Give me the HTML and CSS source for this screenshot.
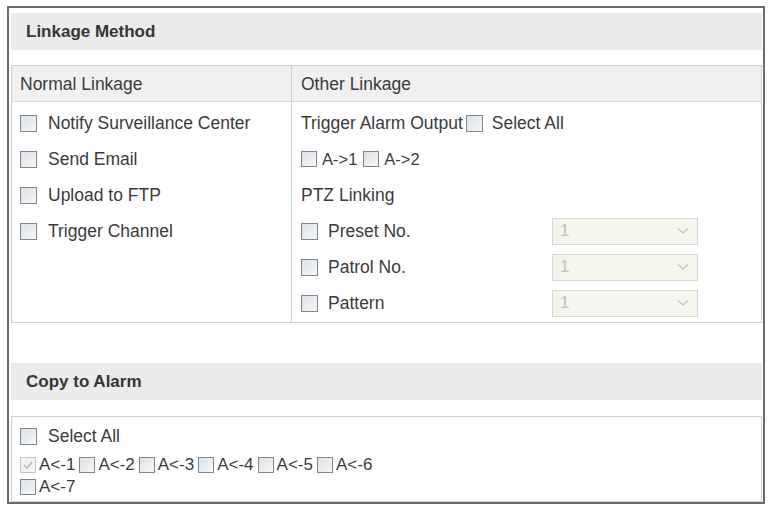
FILE: index.html
```html
<!DOCTYPE html>
<html lang="en">

<head>
    <meta charset="UTF-8">
    <meta name="viewport" content="width=device-width, initial-scale=1.0">
    <title>Linkage Method</title>

    <link rel="stylesheet" href="styles.css">
</head>

<body>
    <div class="panel">
        <div class="section-title">Linkage Method</div>

        <div class="linkage">
            <div class="col">
                <div class="col-head">Normal Linkage</div>
                <div class="col-body">
                    <div class="row"><span class="box"></span><span class="label">Notify Surveillance Center</span></div>
                    <div class="row"><span class="box"></span><span class="label">Send Email</span></div>
                    <div class="row"><span class="box"></span><span class="label">Upload to FTP</span></div>
                    <div class="row"><span class="box"></span><span class="label">Trigger Channel</span></div>
                </div>
            </div>

            <div class="col col-other">
                <div class="col-head">Other Linkage</div>
                <div class="col-body">
                    <div class="row">
                        <span class="plain">Trigger Alarm Output</span>
                        <span class="box box-inline"></span>
                        <span class="plain">Select All</span>
                    </div>
                    <div class="row row-small">
                        <span class="box"></span><span class="tag">A-&gt;1</span>
                        <span class="box"></span><span class="tag">A-&gt;2</span>
                    </div>
                    <div class="row"><span class="plain">PTZ Linking</span></div>
                    <div class="row ptz">
                        <div class="ptz-label"><span class="box"></span><span class="label">Preset No.</span></div>
                        <div class="select"><span>1</span><svg width="12" height="8" viewBox="0 0 12 8"><path d="M1 1.5 L6 6 L11 1.5" fill="none" stroke="#c6c6c2" stroke-width="1.6"/></svg></div>
                    </div>
                    <div class="row ptz">
                        <div class="ptz-label"><span class="box"></span><span class="label">Patrol No.</span></div>
                        <div class="select"><span>1</span><svg width="12" height="8" viewBox="0 0 12 8"><path d="M1 1.5 L6 6 L11 1.5" fill="none" stroke="#c6c6c2" stroke-width="1.6"/></svg></div>
                    </div>
                    <div class="row ptz">
                        <div class="ptz-label"><span class="box"></span><span class="label">Pattern</span></div>
                        <div class="select"><span>1</span><svg width="12" height="8" viewBox="0 0 12 8"><path d="M1 1.5 L6 6 L11 1.5" fill="none" stroke="#c6c6c2" stroke-width="1.6"/></svg></div>
                    </div>
                </div>
            </div>
        </div>

        <div class="section-title section-copy">Copy to Alarm</div>

        <div class="copy-box">
            <div class="row copy-all"><span class="box"></span><span class="label">Select All</span></div>
            <div class="alarm-list">
                <span class="alarm"><span class="box box-done"><svg width="12" height="10" viewBox="0 0 12 10"><path d="M2 5 L5 8 L10 2" fill="none" stroke="#b8b8b8" stroke-width="1.6"/></svg></span>A&lt;-1</span>
                <span class="alarm"><span class="box"></span>A&lt;-2</span>
                <span class="alarm"><span class="box"></span>A&lt;-3</span>
                <span class="alarm"><span class="box"></span>A&lt;-4</span>
                <span class="alarm"><span class="box"></span>A&lt;-5</span>
                <span class="alarm"><span class="box"></span>A&lt;-6</span>
                <span class="alarm"><span class="box"></span>A&lt;-7</span>
            </div>
        </div>
    </div>
</body>

</html>
```

FILE: styles.css
```css
* {
    margin: 0;
    padding: 0;
    box-sizing: border-box;
}

body {
    background: #fff;
    font-family: 'Liberation Sans', Arial, sans-serif;
    color: #3b3a3d;
}

.panel {
    width: 758px;
    height: 498px;
    margin: 6px 0 0 7px;
    border: 2px solid #6b6b6b;
    padding: 5px 1px 0 2px;
}

.section-title {
    height: 37px;
    line-height: 37px;
    background: #ebebeb;
    padding-left: 15px;
    font-size: 17px;
    font-weight: bold;
    color: #353535;
}

.section-copy {
    margin-top: 40px;
}

/* two column linkage table */
.linkage {
    margin-top: 15px;
    height: 258px;
    border: 1px solid #cfcfcf;
    display: grid;
    grid-template-columns: 279px 1fr;
}

.col-other {
    border-left: 1px solid #cfcfcf;
}

.col-head {
    height: 36px;
    line-height: 36px;
    background: #f0f0f0;
    border-bottom: 1px solid #d6d6d6;
    padding-left: 8px;
    font-size: 17.5px;
}

.col-other .col-head {
    padding-left: 9px;
}

.col-body {
    padding: 3px 0 0 8px;
}

.col-other .col-body {
    padding-left: 9px;
}

.row {
    height: 36px;
    display: flex;
    align-items: center;
    font-size: 17.5px;
}

.box {
    width: 17px;
    height: 17px;
    flex: none;
    border: 1px solid #7f858c;
    background: linear-gradient(135deg, #dce1e6, #f6f7f8);
    display: inline-flex;
    align-items: center;
    justify-content: center;
}

.label {
    margin-left: 11px;
}

.box-inline {
    margin: 0 9px 0 3px;
}

.row-small .box {
    width: 16px;
    height: 16px;
    margin-right: 5px;
}

.tag {
    font-size: 16.5px;
    margin-right: 6px;
}

.ptz {
    display: grid;
    grid-template-columns: 251px 146px;
    align-items: center;
}

.ptz-label {
    display: flex;
    align-items: center;
}

.ptz-label .label {
    margin-left: 10px;
}

.select {
    height: 27px;
    background: #f5f5ee;
    border: 1px solid #d8d8d0;
    display: flex;
    align-items: center;
    justify-content: space-between;
    padding: 0 8px 0 7px;
    color: #c2c2bc;
    font-size: 17px;
}

/* copy to alarm box */
.copy-box {
    margin-top: 16px;
    height: 86px;
    border: 1px solid #cfcfcf;
    padding: 4px 0 0 8px;
}

.copy-all {
    height: 30px;
}

.alarm-list {
    margin-top: 3px;
    width: 370px;
    display: flex;
    flex-wrap: wrap;
}

.alarm {
    height: 22px;
    display: inline-flex;
    align-items: center;
    font-size: 17px;
    margin-right: 4px;
}

.alarm .box {
    width: 16px;
    height: 16px;
    margin-right: 3px;
}

.box-done {
    border-color: #c4c4c4;
    background: #f3f3f3;
}
```
